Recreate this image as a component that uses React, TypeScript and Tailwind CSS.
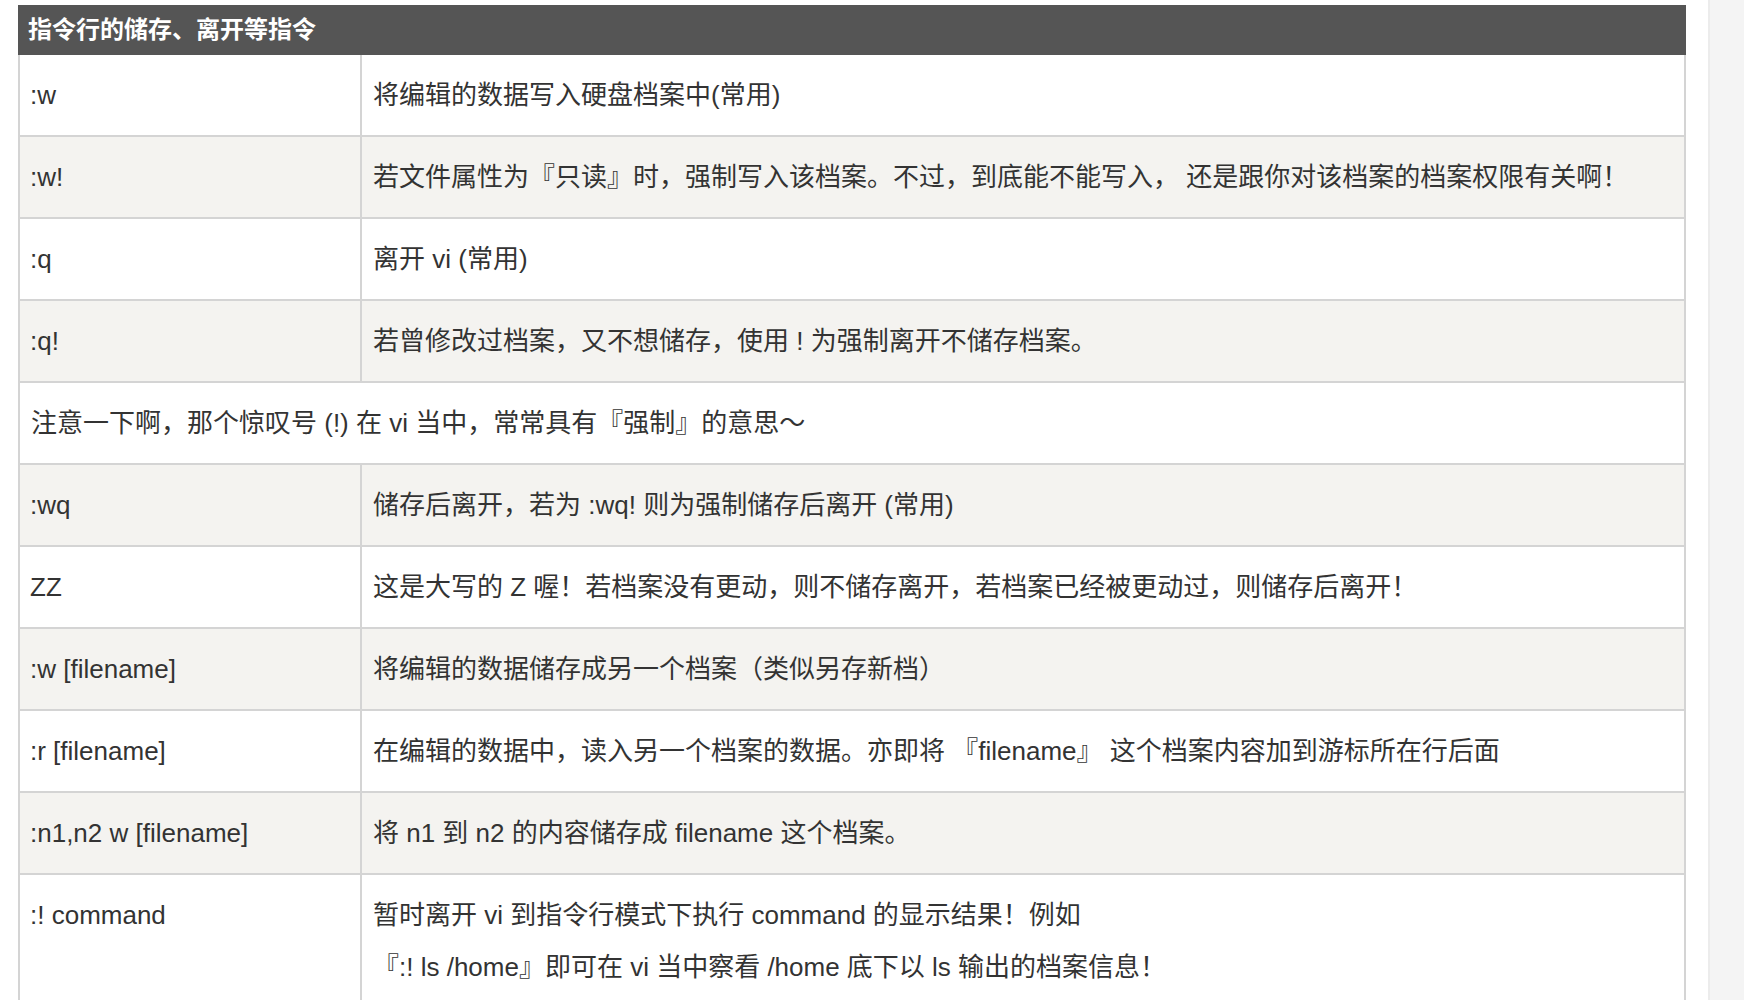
const rows: { cmd?: string; desc: string[]; span?: boolean }[] = [
  { cmd: ":w", desc: ["将编辑的数据写入硬盘档案中(常用)"] },
  {
    cmd: ":w!",
    desc: ["若文件属性为『只读』时，强制写入该档案。不过，到底能不能写入， 还是跟你对该档案的档案权限有关啊！"],
  },
  { cmd: ":q", desc: ["离开 vi (常用)"] },
  { cmd: ":q!", desc: ["若曾修改过档案，又不想储存，使用 ! 为强制离开不储存档案。"] },
  { span: true, desc: ["注意一下啊，那个惊叹号 (!) 在 vi 当中，常常具有『强制』的意思～"] },
  { cmd: ":wq", desc: ["储存后离开，若为 :wq! 则为强制储存后离开 (常用)"] },
  { cmd: "ZZ", desc: ["这是大写的 Z 喔！若档案没有更动，则不储存离开，若档案已经被更动过，则储存后离开！"] },
  { cmd: ":w [filename]", desc: ["将编辑的数据储存成另一个档案（类似另存新档）"] },
  { cmd: ":r [filename]", desc: ["在编辑的数据中，读入另一个档案的数据。亦即将 『filename』 这个档案内容加到游标所在行后面"] },
  { cmd: ":n1,n2 w [filename]", desc: ["将 n1 到 n2 的内容储存成 filename 这个档案。"] },
  {
    cmd: ":! command",
    desc: [
      "暂时离开 vi 到指令行模式下执行 command 的显示结果！例如",
      "『:! ls /home』即可在 vi 当中察看 /home 底下以 ls 输出的档案信息！",
    ],
  },
];

export default function App() {
  return (
    <div
      className="flex w-full h-[1000px] overflow-hidden bg-white text-[#333]"
      style={{ fontFamily: '"Liberation Sans", "Noto Sans CJK SC", sans-serif' }}
    >
      {/* main column */}
      <div className="pl-[18px] pt-[5px] shrink-0">
        <div className="w-[1668px]">
          <div className="h-[50px] bg-[#555555] pl-[10px] flex items-center text-white text-[24px] font-bold">
            指令行的储存、离开等指令
          </div>
          <div className="border-x-2 border-[#d4d4d4]">
            {rows.map((row, idx) => (
              <div
                key={idx}
                className={`flex border-b-2 border-[#d4d4d4] text-[26px] leading-[52px] ${
                  idx % 2 === 1 ? "bg-[#f4f3f0]" : "bg-white"
                }`}
              >
                {row.span ? (
                  <div className="flex-1 pl-[11px] py-[14px]">{row.desc[0]}</div>
                ) : (
                  <>
                    <div className="w-[342px] shrink-0 border-r-2 border-[#d4d4d4] pl-[10px] py-[14px]">{row.cmd}</div>
                    <div className="flex-1 pl-[11px] py-[14px]">
                      {row.desc.map((line, i) => (
                        <div key={i}>{line}</div>
                      ))}
                    </div>
                  </>
                )}
              </div>
            ))}
          </div>
        </div>
      </div>

      {/* right sidebar strip */}
      <div className="ml-[22px] flex-1 border-l-2 border-[#ececec] bg-[#f4f4f4]" />
    </div>
  );
}
